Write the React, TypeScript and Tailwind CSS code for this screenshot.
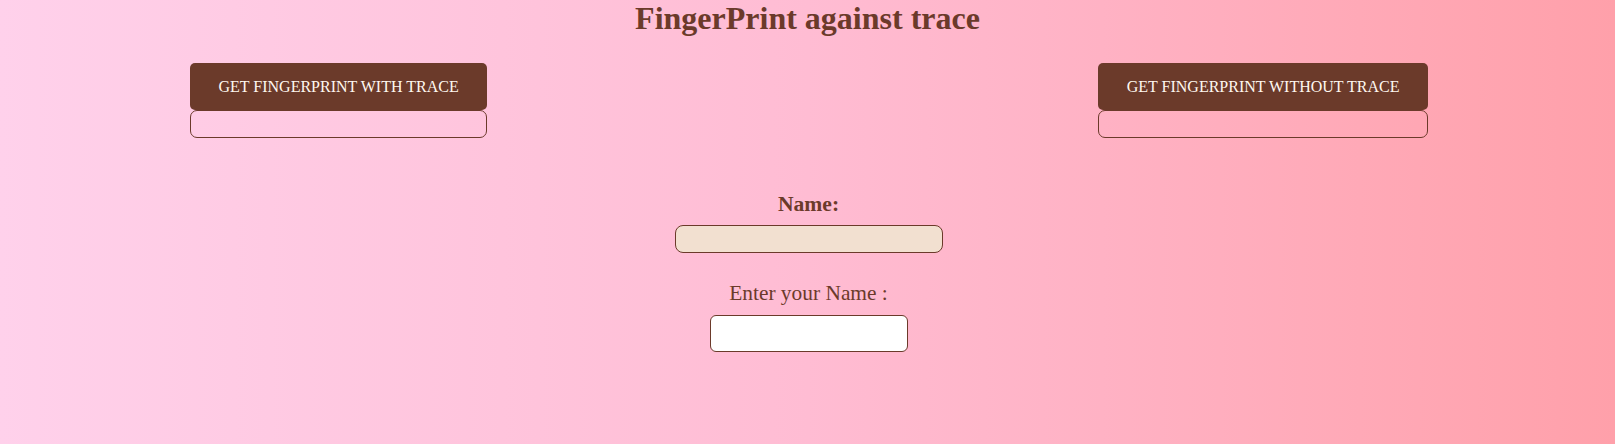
const App = () => {
  return (
    <div
      className="min-h-screen w-full bg-gradient-to-r from-[#ffd1eb] via-[#ffbcd3] to-[#ffa0aa] text-[#6b3a2a]"
      style={{ fontFamily: '"Liberation Serif", "Times New Roman", serif' }}
    >
      <h1 className="text-center text-[32px] font-bold leading-[37px]">FingerPrint against trace</h1>

      {/* Buttons */}
      <div className="mt-[26px] flex justify-between pl-[190px] pr-[187px]">
        <div className="flex flex-col">
          <button className="rounded-[5px] bg-[#6b3a2a] px-[28.5px] py-[14px] text-[16px] leading-[19px] text-[#fff8f0]">
            GET FINGERPRINT WITH TRACE
          </button>
          <div className="h-[28px] rounded-[7px] border border-[#6b3a2a]"></div>
        </div>
        <div className="flex flex-col">
          <button className="rounded-[5px] bg-[#6b3a2a] px-[28.5px] py-[14px] text-[16px] leading-[19px] text-[#fff8f0]">
            GET FINGERPRINT WITHOUT TRACE
          </button>
          <div className="h-[28px] rounded-[7px] border border-[#6b3a2a]"></div>
        </div>
      </div>

      {/* Form */}
      <div className="mt-[54px] flex flex-col items-center pl-[2px]">
        <label className="text-[21.6px] font-bold leading-[24px]">Name:</label>
        <div className="mt-[9px] h-[28px] w-[268px] rounded-[8px] border border-[#6b3a2a] bg-[#f2e0d0]"></div>
        <label className="mt-[28px] text-[21.4px] leading-[24px]">Enter your Name :</label>
        <input
          type="text"
          className="mt-[10px] h-[37px] w-[198px] rounded-[6px] border border-[#6b3a2a] bg-white px-2 outline-none"
        />
      </div>
    </div>
  );
};

export default App;
